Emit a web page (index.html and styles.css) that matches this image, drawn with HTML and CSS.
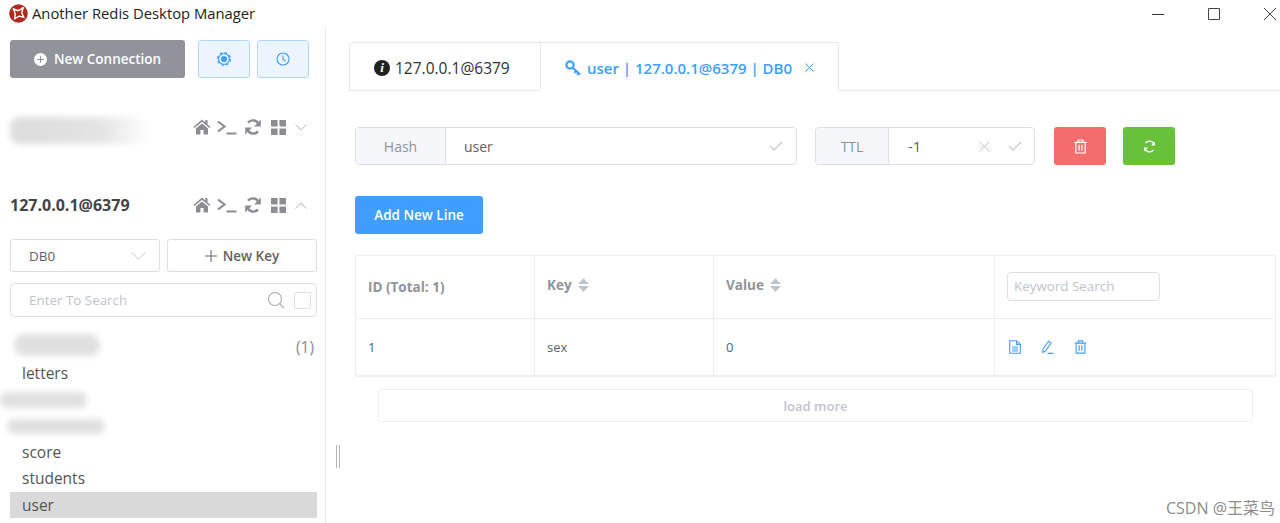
FILE: index.html
```html
<!DOCTYPE html>
<html lang="en">
<head>
<meta charset="utf-8">
<title>Another Redis Desktop Manager</title>
<link rel="stylesheet" href="styles.css">
</head>
<body>
<svg class="defs" width="0" height="0">
  <symbol id="i-home" viewBox="0 0 18 16"><path d="M9 0.5 0.5 8l1 1.1L9 2.8l7.5 6.3 1-1.1-3-2.6V1h-2.2v2.6zM3 9.6V15.5h4.4v-4.4h3.2v4.4H15V9.6L9 4.6z" fill="currentColor"/></symbol>
  <symbol id="i-term" viewBox="0 0 20 16"><path d="M1 2.5 7.5 7.5 1 12.5M9.5 14.5H19.5" fill="none" stroke="currentColor" stroke-width="2.2"/></symbol>
  <symbol id="i-sync" viewBox="0 0 16 16"><path d="M13.6 5.6A6.2 6.2 0 0 0 3 3.6M2.4 10.4A6.2 6.2 0 0 0 13 12.4" fill="none" stroke="currentColor" stroke-width="2.4"/><path d="M15.8 0.6v6.8H9zM.2 15.4V8.6h6.8z" fill="currentColor"/></symbol>
  <symbol id="i-grid" viewBox="0 0 16 16"><path d="M0 0h7v7H0zM9 0h7v7H9zM0 9h7v7H0zM9 9h7v7H9z" fill="currentColor"/></symbol>
  <symbol id="i-trash" viewBox="0 0 14 16"><path d="M.5 3.5h13M4.5 3.5V1h5v2.5M2 3.5V15h10V3.5M5.5 6v6.5M8.5 6v6.5" fill="none" stroke="currentColor" stroke-width="1.3"/></symbol>
  <symbol id="i-refresh" viewBox="0 0 14 14"><path d="M11.8 5A5 5 0 0 0 2.8 3.4M2.2 9A5 5 0 0 0 11.2 10.6" fill="none" stroke="currentColor" stroke-width="1.5"/><path d="M12.8 1.6v4.2H8.6zM1.2 12.4V8.2h4.2z" fill="currentColor"/></symbol>
  <symbol id="i-check" viewBox="0 0 14 10"><path d="M1 5.2 5 9 13 1" fill="none" stroke="currentColor" stroke-width="1.1"/></symbol>
  <symbol id="i-sort" viewBox="0 0 12 15"><path d="M6 0 12 6.4H0zM6 15 0 8.6h12z" fill="currentColor"/></symbol>
</svg>

<header class="titlebar">
  <svg class="logo" viewBox="0 0 20 20" width="19" height="19"><circle cx="10" cy="10" r="9.8" fill="#b3271c"/><path d="M5 5.5 9.5 7 14.5 4.5 13.5 9.5 15.5 14 10.5 12.8 6 15.5 6.5 10.5z" fill="none" stroke="#fff" stroke-width="1.5"/><circle cx="14.5" cy="4.5" r="1.3" fill="#fff"/><circle cx="5" cy="5.5" r="1.1" fill="#fff"/></svg>
  <span class="app-title">Another Redis Desktop Manager</span>
  <div class="win-controls">
    <svg width="14" height="14" viewBox="0 0 14 14"><path d="M1 7.5H13" stroke="#333" stroke-width="1"/></svg>
    <svg width="14" height="14" viewBox="0 0 14 14"><path d="M1.5 1.5h11v11h-11z" fill="none" stroke="#444" stroke-width="1"/></svg>
    <svg width="14" height="14" viewBox="0 0 14 14"><path d="M1 1 13 13M13 1 1 13" stroke="#444" stroke-width="1"/></svg>
  </div>
</header>

<div class="layout">
  <aside class="sidebar">
    <div class="side-top">
      <button class="btn-new"><svg width="13" height="13" viewBox="0 0 14 14"><circle cx="7" cy="7" r="7" fill="#fff"/><path d="M7 3.5v7M3.5 7h7" stroke="#909399" stroke-width="1.2"/></svg>New Connection</button>
      <button class="btn-soft"><svg width="14" height="14" viewBox="0 0 14 14"><circle cx="7" cy="7" r="5.4" fill="none" stroke="#409eff" stroke-width="1.2"/><circle cx="7" cy="7" r="6.4" fill="none" stroke="#409eff" stroke-width="1.2" stroke-dasharray="2.6 2.4"/><circle cx="7" cy="7" r="3.1" fill="#409eff"/></svg></button>
      <button class="btn-soft"><svg width="14" height="14" viewBox="0 0 14 14"><circle cx="7" cy="7" r="6" fill="none" stroke="#409eff" stroke-width="1.1"/><path d="M7 3.5V7.6L9.6 9" fill="none" stroke="#409eff" stroke-width="1.1"/></svg></button>
    </div>

    <div class="server server-first">
      <div class="server-name"><span class="blur blur-server"></span></div>
      <div class="server-icons">
        <svg class="ic-home"><use href="#i-home"/></svg><svg class="ic-term"><use href="#i-term"/></svg><svg class="ic-sync"><use href="#i-sync"/></svg><svg class="ic-grid"><use href="#i-grid"/></svg>
        <svg class="ic-chev" viewBox="0 0 12 7"><path d="M.5.5 6 6 11.5.5" fill="none" stroke="currentColor"/></svg>
      </div>
    </div>

    <div class="server server-second">
      <div class="server-name">127.0.0.1@6379</div>
      <div class="server-icons">
        <svg class="ic-home"><use href="#i-home"/></svg><svg class="ic-term"><use href="#i-term"/></svg><svg class="ic-sync"><use href="#i-sync"/></svg><svg class="ic-grid"><use href="#i-grid"/></svg>
        <svg class="ic-chev" viewBox="0 0 12 7"><path d="M.5 6.5 6 1l5.5 5.5" fill="none" stroke="currentColor"/></svg>
      </div>
    </div>

    <div class="db-row">
      <div class="db-select"><span>DB0</span><svg width="15" height="8" viewBox="0 0 15 8"><path d="M.5.5 7.5 7 14.5.5" fill="none" stroke="#c0c4cc"/></svg></div>
      <button class="btn-newkey"><svg width="12" height="12" viewBox="0 0 12 12"><path d="M6 0v12M0 6h12" stroke="#606266" stroke-width="1"/></svg>New Key</button>
    </div>

    <div class="search-row">
      <span class="search-ph">Enter To Search</span>
      <svg width="18" height="18" viewBox="0 0 18 18"><circle cx="8" cy="8" r="6.5" fill="none" stroke="#a8abb2" stroke-width="1.1"/><path d="M12.8 12.8 17 17" stroke="#a8abb2" stroke-width="1.1"/></svg>
      <span class="checkbox"></span>
    </div>

    <ul class="keys">
      <li class="key"><span class="blur blur-k1"></span><span class="count">(1)</span></li>
      <li class="key">letters</li>
      <li class="key"><span class="blur blur-k2"></span></li>
      <li class="key"><span class="blur blur-k3"></span></li>
      <li class="key">score</li>
      <li class="key">students</li>
      <li class="key key-active">user</li>
    </ul>
  </aside>

  <div class="splitter"></div>

  <main class="content">
    <nav class="tabs">
      <div class="tab tab-info">
        <svg width="16" height="16" viewBox="0 0 16 16"><circle cx="8" cy="8" r="8" fill="#222"/><text class="info-i" x="8" y="12.4" text-anchor="middle">i</text></svg>
        127.0.0.1@6379
      </div>
      <div class="tab tab-key">
        <svg width="17" height="16" viewBox="0 0 17 16"><circle cx="5" cy="5" r="3.6" fill="none" stroke="#409eff" stroke-width="2.2"/><path d="M7.6 7.6 15 14.5M11 11l-1.7 1.8M13.4 13.2 12 14.8" fill="none" stroke="#409eff" stroke-width="2"/></svg>
        user | 127.0.0.1@6379 | DB0
        <svg class="tab-close" width="9" height="9" viewBox="0 0 9 9"><path d="M.5.5l8 8M8.5.5l-8 8" stroke="#409eff" stroke-width="1"/></svg>
      </div>
    </nav>

    <div class="toolbar">
      <div class="group group-key">
        <span class="prefix prefix-hash">Hash</span>
        <div class="field"><span>user</span><svg class="check"><use href="#i-check"/></svg></div>
      </div>
      <div class="group group-ttl">
        <span class="prefix prefix-ttl">TTL</span>
        <div class="field field-ttl"><span>-1</span><svg class="clear" viewBox="0 0 11 11"><path d="M.5.5l10 10M10.5.5l-10 10" stroke="#c0c4cc" stroke-width="1"/></svg><svg class="check"><use href="#i-check"/></svg></div>
      </div>
      <button class="btn-square btn-danger"><svg width="13" height="15"><use href="#i-trash"/></svg></button>
      <button class="btn-square btn-success"><svg width="13" height="13"><use href="#i-refresh"/></svg></button>
    </div>

    <button class="btn-add">Add New Line</button>

    <table class="grid">
      <colgroup><col class="c1"><col class="c2"><col class="c3"><col></colgroup>
      <thead>
        <tr>
          <th>ID (Total: 1)</th>
          <th><span class="sortable">Key<svg width="11" height="14"><use href="#i-sort"/></svg></span></th>
          <th><span class="sortable">Value<svg width="11" height="14"><use href="#i-sort"/></svg></span></th>
          <th><div class="kw">Keyword Search</div></th>
        </tr>
      </thead>
      <tbody>
        <tr>
          <td>1</td><td>sex</td><td>0</td>
          <td><div class="row-actions">
            <svg width="12" height="14" viewBox="0 0 12 14"><path d="M.7.7h6.8L11.3 4.5v8.8H.7zM7.5.7v3.8h3.8M3 7h6M3 9h6M3 11h6" fill="none" stroke="#409eff" stroke-width="1.1"/></svg>
            <svg width="13" height="14" viewBox="0 0 13 14"><path d="M2 9 7.5 1.2l2.6 1.8L4.6 11l-2.8 1.4zM6.5 13.4H12.5" fill="none" stroke="#409eff" stroke-width="1.1"/></svg>
            <svg width="13" height="14"><use href="#i-trash"/></svg>
          </div></td>
        </tr>
      </tbody>
    </table>

    <button class="btn-more">load more</button>
  </main>
</div>
<div class="watermark">CSDN @王菜鸟</div>
</body>
</html>
```
FILE: styles.css
```css
* { box-sizing: border-box; }
html, body { margin: 0; height: 523px; overflow: hidden; }
body { background: #fff; color: #606266; font-family: "Open Sans", "Noto Sans", "Noto Sans CJK SC", sans-serif; font-size: 14px; position: relative; }
button { font-family: inherit; cursor: pointer; padding: 0; }
.defs { position: absolute; }

.titlebar { height: 26px; display: flex; align-items: center; padding-left: 9px; }
.logo { flex: none; }
.app-title { margin-left: 4px; font-size: 14.8px; color: #222; }
.win-controls { margin-left: auto; display: flex; gap: 42px; padding-right: 3px; padding-top: 1px; }

.layout { display: flex; height: 497px; }
.sidebar { width: 326px; flex: none; border-right: 1px solid #eaeaef; padding: 14px 8px 0 10px; }
.side-top { display: flex; height: 38px; }
.btn-new { width: 175px; height: 38px; background: #909399; color: #fff; border: 0; border-radius: 3px; font-weight: 600; font-size: 13.5px; display: flex; align-items: center; justify-content: center; gap: 7px; }
.btn-soft { width: 52px; height: 38px; margin-left: 13px; background: #ecf5ff; border: 1px solid #b3d8ff; border-radius: 3px; display: flex; align-items: center; justify-content: center; }
.btn-soft + .btn-soft { margin-left: 7px; }

.server { display: flex; align-items: center; justify-content: space-between; height: 24px; }
.server-first { margin-top: 37px; }
.server-second { margin-top: 54px; }
.server-name { font-weight: 700; font-size: 16px; color: #444; }
.server-icons { display: flex; align-items: center; color: #8b8d92; padding-right: 10px; }
.ic-home { width: 18px; height: 16px; }
.ic-term { width: 20px; height: 16px; margin-left: 6px; }
.ic-sync { width: 16px; height: 16px; margin-left: 8px; }
.ic-grid { width: 15px; height: 15px; margin-left: 10px; }
.ic-chev { width: 12px; height: 7px; margin-left: 9px; color: #b4b6bb; }

.blur { display: block; background: #e0e0e0; filter: blur(3px); border-radius: 10px; }
.blur-server { width: 140px; height: 27px; margin-top: 6px; background: linear-gradient(90deg, #dcdcdc, #e4e4e4 65%, #fff); }
.blur-k1 { width: 86px; height: 22px; margin-left: -8px; margin-top: -4px; }
.blur-k2 { width: 87px; height: 16px; margin-left: -22px; }
.blur-k3 { width: 98px; height: 15px; margin-left: -15px; }

.db-row { display: flex; gap: 7px; margin-top: 22px; }
.db-select, .btn-newkey { height: 33px; border: 1px solid #dcdfe6; border-radius: 3px; background: #fff; display: flex; align-items: center; }
.db-select { width: 150px; justify-content: space-between; padding: 0 13px 0 18px; color: #606266; font-size: 13.5px; }
.btn-newkey { width: 150px; justify-content: center; gap: 6px; color: #606266; font-size: 13.5px; font-weight: 600; }

.search-row { height: 34px; margin-top: 11px; border: 1px solid #dcdfe6; border-radius: 4px; display: flex; align-items: center; padding: 0 5px 0 18px; }
.search-ph { flex: 1; color: #c0c4cc; font-size: 13.4px; }
.checkbox { width: 17px; height: 17px; margin-left: 9px; border: 1px solid #dcdfe6; border-radius: 2px; }

.keys { list-style: none; margin: 17px 0 0; padding: 0; }
.key { height: 26.3px; line-height: 26.3px; padding-left: 12px; font-size: 15.5px; color: #555; display: flex; align-items: center; justify-content: space-between; }
.count { padding-right: 3px; color: #8a8a8a; font-size: 15.5px; }
.key-active { background: #d9d9d9; }

.splitter { width: 4px; height: 23px; flex: none; margin: 419px 0 0 10px; border-left: 1px solid #b5b5b5; border-right: 1px solid #b5b5b5; }

.content { flex: 1; min-width: 0; padding: 16px 0 0 9px; }
.tabs { display: flex; height: 49px; border-bottom: 1px solid #e4e7ed; }
.tab { height: 49px; flex: none; display: flex; align-items: center; padding-top: 2px; border: 1px solid #e4e7ed; }
.tab-info { width: 192px; padding-left: 24px; gap: 5px; color: #303133; border-radius: 4px 0 0 0; font-size: 15.5px; }
.tab-key { width: 299px; margin-left: -1px; padding-left: 24px; gap: 5px; color: #409eff; border-bottom-color: #fff; border-radius: 0 4px 0 0; font-size: 15px; font-weight: 600; }
.tab-close { margin-left: 8px; }
.info-i { font-family: "Liberation Serif", serif; font-style: italic; font-weight: 700; font-size: 13px; fill: #fff; }

.toolbar { display: flex; margin: 36px 0 0 6px; height: 38px; }
.group { display: flex; height: 38px; border: 1px solid #dcdfe6; border-radius: 4px; }
.group-key { width: 442px; }
.group-ttl { width: 220px; margin-left: 18px; }
.prefix { flex: none; background: #f5f7fa; border-right: 1px solid #dcdfe6; border-radius: 3px 0 0 3px; color: #909399; display: flex; align-items: center; justify-content: center; font-size: 14px; }
.prefix-hash { width: 90px; }
.prefix-ttl { width: 73px; }
.field { flex: 1; display: flex; align-items: center; padding: 0 13px 0 18px; color: #606266; font-size: 14px; }
.field span { flex: 1; }
.field-ttl { padding: 0 12px 0 19px; font-size: 15px; }
.check { width: 14px; height: 10px; color: #c0c4cc; }
.clear { width: 11px; height: 11px; margin-right: 18px; }
.btn-square { width: 52px; height: 38px; border: 0; border-radius: 3px; color: #fff; display: flex; align-items: center; justify-content: center; }
.btn-danger { background: #f56c6c; margin-left: 19px; }
.btn-success { background: #67c23a; margin-left: 17px; }

.btn-add { display: block; margin: 31px 0 0 6px; width: 128px; height: 38px; background: #409eff; color: #fff; border: 0; border-radius: 3px; font-weight: 600; font-size: 13.5px; }

.grid { margin: 21px 0 0 6px; width: 921px; height: 122px; border-collapse: collapse; table-layout: fixed; border: 1px solid #ebeef5; border-bottom-width: 2px; font-size: 13px; color: #606266; }
.c1 { width: 179px; }
.c2 { width: 179px; }
.c3 { width: 281px; }
.grid th, .grid td { border: 1px solid #ebeef5; text-align: left; padding: 0 12px; }
.grid th { height: 63px; color: #909399; font-weight: 700; font-size: 13.5px; }
.sortable { display: inline-flex; align-items: center; gap: 6px; position: relative; top: -2px; }
.sortable svg { color: #c0c4cc; }
.kw { width: 153px; height: 29px; margin-top: -1px; border: 1px solid #dcdfe6; border-radius: 4px; padding-left: 6px; line-height: 27px; color: #c0c4cc; font-weight: 400; font-size: 13.4px; }
.row-actions { display: flex; align-items: center; gap: 20px; padding-left: 2px; color: #409eff; }

.btn-more { display: block; margin: 12px 0 0 29px; width: 875px; height: 33px; background: #fff; border: 1px solid #ebeef5; border-radius: 3px; color: #c0c4cc; font-weight: 600; font-size: 13px; }

.watermark { position: absolute; right: 5px; bottom: 4px; font-size: 16px; color: #8c8c8c; }
```
